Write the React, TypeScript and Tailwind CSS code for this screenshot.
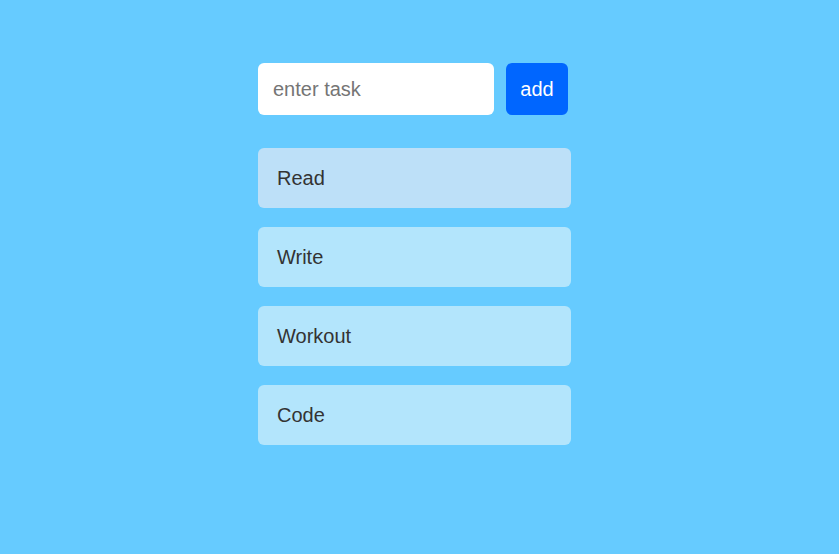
import { useState } from "react";

const tasks = ["Read", "Write", "Workout", "Code"];

export default function App() {
  const [value, setValue] = useState("");
  const [items, setItems] = useState<string[]>(tasks);

  const addTask = () => {
    if (!value.trim()) return;
    setItems((prev) => [...prev, value.trim()]);
    setValue("");
  };

  return (
    <div
      className="min-h-[554px] w-full bg-[#66CBFF] pt-[63px]"
      style={{ fontFamily: '"Liberation Sans", Arial, sans-serif' }}
    >
      <div className="mx-auto w-[323px]">
        {/* Input row */}
        <div className="flex gap-[12px]">
          <input
            value={value}
            onChange={(e) => setValue(e.target.value)}
            placeholder="enter task"
            className="h-[52px] w-[236px] rounded-[6px] bg-white px-[15px] text-[20px] text-[#333] outline-none placeholder:text-[#757575]"
          />
          <button
            onClick={addTask}
            className="h-[52px] w-[62px] rounded-[6px] bg-[#0066FF] text-[20px] text-white"
          >
            add
          </button>
        </div>

        {/* Task list */}
        <ul className="mt-[33px] flex flex-col gap-[19px]">
          {items.map((t, i) => (
            <li
              key={i}
              className={`flex h-[60px] w-[313px] items-center rounded-[6px] pl-[19px] text-[20px] text-[#333] ${
                i === 0 ? "bg-[#BDE0F8]" : "bg-[#B3E5FC]"
              }`}
            >
              {t}
            </li>
          ))}
        </ul>
      </div>
    </div>
  );
}
